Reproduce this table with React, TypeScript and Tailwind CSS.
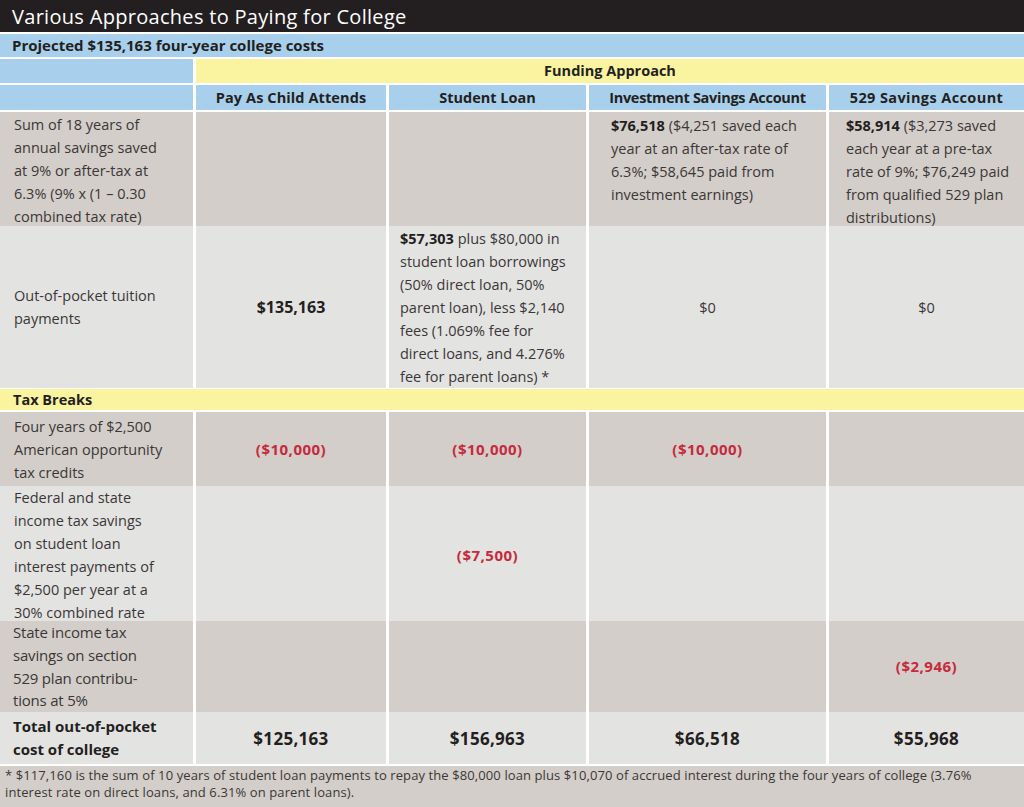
import React from "react";

const BLUE = "bg-[#a8d0ec]";
const YEL = "bg-[#faf4a1]";
const DARK = "bg-[#d3cec9]";
const LIGHT = "bg-[#e3e3e2]";

function Lines({ lines }: { lines: React.ReactNode[] }) {
  return (
    <div className="whitespace-nowrap">
      {lines.map((l, i) => (
        <div key={i}>{l}</div>
      ))}
    </div>
  );
}

const Red = ({ children }: { children: React.ReactNode }) => (
  <span className="font-bold text-[#c62a3d] text-[15px] tracking-[0.5px]">{children}</span>
);

const cols = "grid grid-cols-[193px_190px_197px_237px_1fr] gap-x-[3px]";

export default function App() {
  return (
    <div className="w-[1024px] h-[807px] bg-white font-['Open_Sans','Noto_Sans',sans-serif] text-[#3b3737] text-[14.5px] leading-[23px] overflow-hidden">
      {/* Title */}
      <div className="h-[32px] bg-[#231f20] text-white text-[20px] font-medium leading-[33px] pl-[12px] tracking-[0.3px]">
        Various Approaches to Paying for College
      </div>
      <div className="flex flex-col gap-y-[2px] pt-[2px]">
        <div className={`h-[23px] ${BLUE} pl-[12px] font-bold text-[#231f20] text-[15px] leading-[23px]`}>
          Projected $135,163 four-year college costs
        </div>
        <div className="grid grid-cols-[193px_1fr] gap-x-[3px] h-[24px]">
          <div className={BLUE} />
          <div className={`${YEL} text-center font-bold text-[#231f20] leading-[24px]`}>
            Funding Approach
          </div>
        </div>
        <div className={`${cols} h-[25px] font-bold text-[#231f20] leading-[25px] text-center`}>
          <div className={BLUE} />
          <div className={`${BLUE} tracking-[0.1px]`}>Pay As Child Attends</div>
          <div className={BLUE}>Student Loan</div>
          <div className={`${BLUE} tracking-[-0.3px]`}>Investment Savings Account</div>
          <div className={`${BLUE} tracking-[0.4px]`}>529 Savings Account</div>
        </div>
        {/* Body part 1 */}
        <div className="flex flex-col">
          <div className={`${cols} h-[114px]`}>
            <div className={`${DARK} pl-[14px] pt-[1px]`}>
              <Lines
                lines={[
                  "Sum of 18 years of",
                  "annual savings saved",
                  "at 9% or after-tax at",
                  "6.3% (9% x (1 – 0.30",
                  "combined tax rate)",
                ]}
              />
            </div>
            <div className={DARK} />
            <div className={DARK} />
            <div className={`${DARK} pl-[22px] pt-[2px]`}>
              <Lines
                lines={[
                  <>
                    <b className="text-[#231f20]">$76,518</b> ($4,251 saved each
                  </>,
                  "year at an after-tax rate of",
                  "6.3%; $58,645 paid from",
                  "investment earnings)",
                ]}
              />
            </div>
            <div className={`${DARK} pl-[17px] pt-[2px]`}>
              <Lines
                lines={[
                  <>
                    <b className="text-[#231f20]">$58,914</b> ($3,273 saved
                  </>,
                  "each year at a pre-tax",
                  "rate of 9%; $76,249 paid",
                  "from qualified 529 plan",
                  "distributions)",
                ]}
              />
            </div>
          </div>
          <div className={`${cols} h-[161px]`}>
            <div className={`${LIGHT} pl-[14px] flex items-center`}>
              <Lines lines={["Out-of-pocket tuition", "payments"]} />
            </div>
            <div className={`${LIGHT} flex items-center justify-center font-bold text-[#231f20] text-[16px]`}>
              $135,163
            </div>
            <div className={`${LIGHT} pl-[11px] pt-[1px]`}>
              <Lines
                lines={[
                  <>
                    <b className="text-[#231f20]">$57,303</b> plus $80,000 in
                  </>,
                  "student loan borrowings",
                  "(50% direct loan, 50%",
                  "parent loan), less $2,140",
                  "fees (1.069% fee for",
                  "direct loans, and 4.276%",
                  "fee for parent loans) *",
                ]}
              />
            </div>
            <div className={`${LIGHT} flex items-center justify-center`}>$0</div>
            <div className={`${LIGHT} flex items-center justify-center`}>$0</div>
          </div>
        </div>
        <div className={`${YEL} h-[21px] pl-[13px] font-bold text-[#231f20] leading-[21px]`}>
          Tax Breaks
        </div>
        {/* Body part 2 */}
        <div className="flex flex-col">
          <div className={`${cols} h-[74px]`}>
            <div className={`${DARK} pl-[14px] flex items-center`}>
              <Lines lines={["Four years of $2,500", "American opportunity", "tax credits"]} />
            </div>
            <div className={`${DARK} flex items-center justify-center`}>
              <Red>($10,000)</Red>
            </div>
            <div className={`${DARK} flex items-center justify-center`}>
              <Red>($10,000)</Red>
            </div>
            <div className={`${DARK} flex items-center justify-center`}>
              <Red>($10,000)</Red>
            </div>
            <div className={DARK} />
          </div>
          <div className={`${cols} h-[135px]`}>
            <div className={`${LIGHT} pl-[14px] flex items-center`}>
              <Lines
                lines={[
                  "Federal and state",
                  "income tax savings",
                  "on student loan",
                  "interest payments of",
                  "$2,500 per year at a",
                  "30% combined rate",
                ]}
              />
            </div>
            <div className={LIGHT} />
            <div className={`${LIGHT} flex items-center justify-center`}>
              <Red>($7,500)</Red>
            </div>
            <div className={LIGHT} />
            <div className={LIGHT} />
          </div>
          <div className={`${cols} h-[91px]`}>
            <div className={`${DARK} pl-[13px] flex items-center`}>
              <div className="whitespace-nowrap leading-[22.7px] text-[15px] tracking-[-0.2px]">
                <div>State income tax</div>
                <div>savings on section</div>
                <div>529 plan contribu-</div>
                <div>tions at 5%</div>
              </div>
            </div>
            <div className={DARK} />
            <div className={DARK} />
            <div className={DARK} />
            <div className={`${DARK} flex items-center justify-center`}>
              <Red>($2,946)</Red>
            </div>
          </div>
          <div className={`${cols} h-[52px] font-bold text-[#231f20]`}>
            <div className={`${LIGHT} pl-[13px] flex items-center`}>
              <div className="whitespace-nowrap leading-[23px] text-[15px]">
                <div>Total out-of-pocket</div>
                <div>cost of college</div>
              </div>
            </div>
            <div className={`${LIGHT} flex items-center justify-center text-[17px] tracking-[0.3px]`}>$125,163</div>
            <div className={`${LIGHT} flex items-center justify-center text-[17px] tracking-[0.3px]`}>$156,963</div>
            <div className={`${LIGHT} flex items-center justify-center text-[17px] tracking-[0.3px]`}>$66,518</div>
            <div className={`${LIGHT} flex items-center justify-center text-[17px] tracking-[0.3px]`}>$55,968</div>
          </div>
        </div>
        <div className={`${DARK} h-[50px] pl-[5px] pt-[1px] text-[13px] leading-[17px] tracking-[0.1px]`}>
          <div className="whitespace-nowrap">
            * $117,160 is the sum of 10 years of student loan payments to repay the $80,000 loan plus $10,070 of accrued interest during the four years of college (3.76%
          </div>
          <div className="whitespace-nowrap">interest rate on direct loans, and 6.31% on parent loans).</div>
        </div>
      </div>
    </div>
  );
}
